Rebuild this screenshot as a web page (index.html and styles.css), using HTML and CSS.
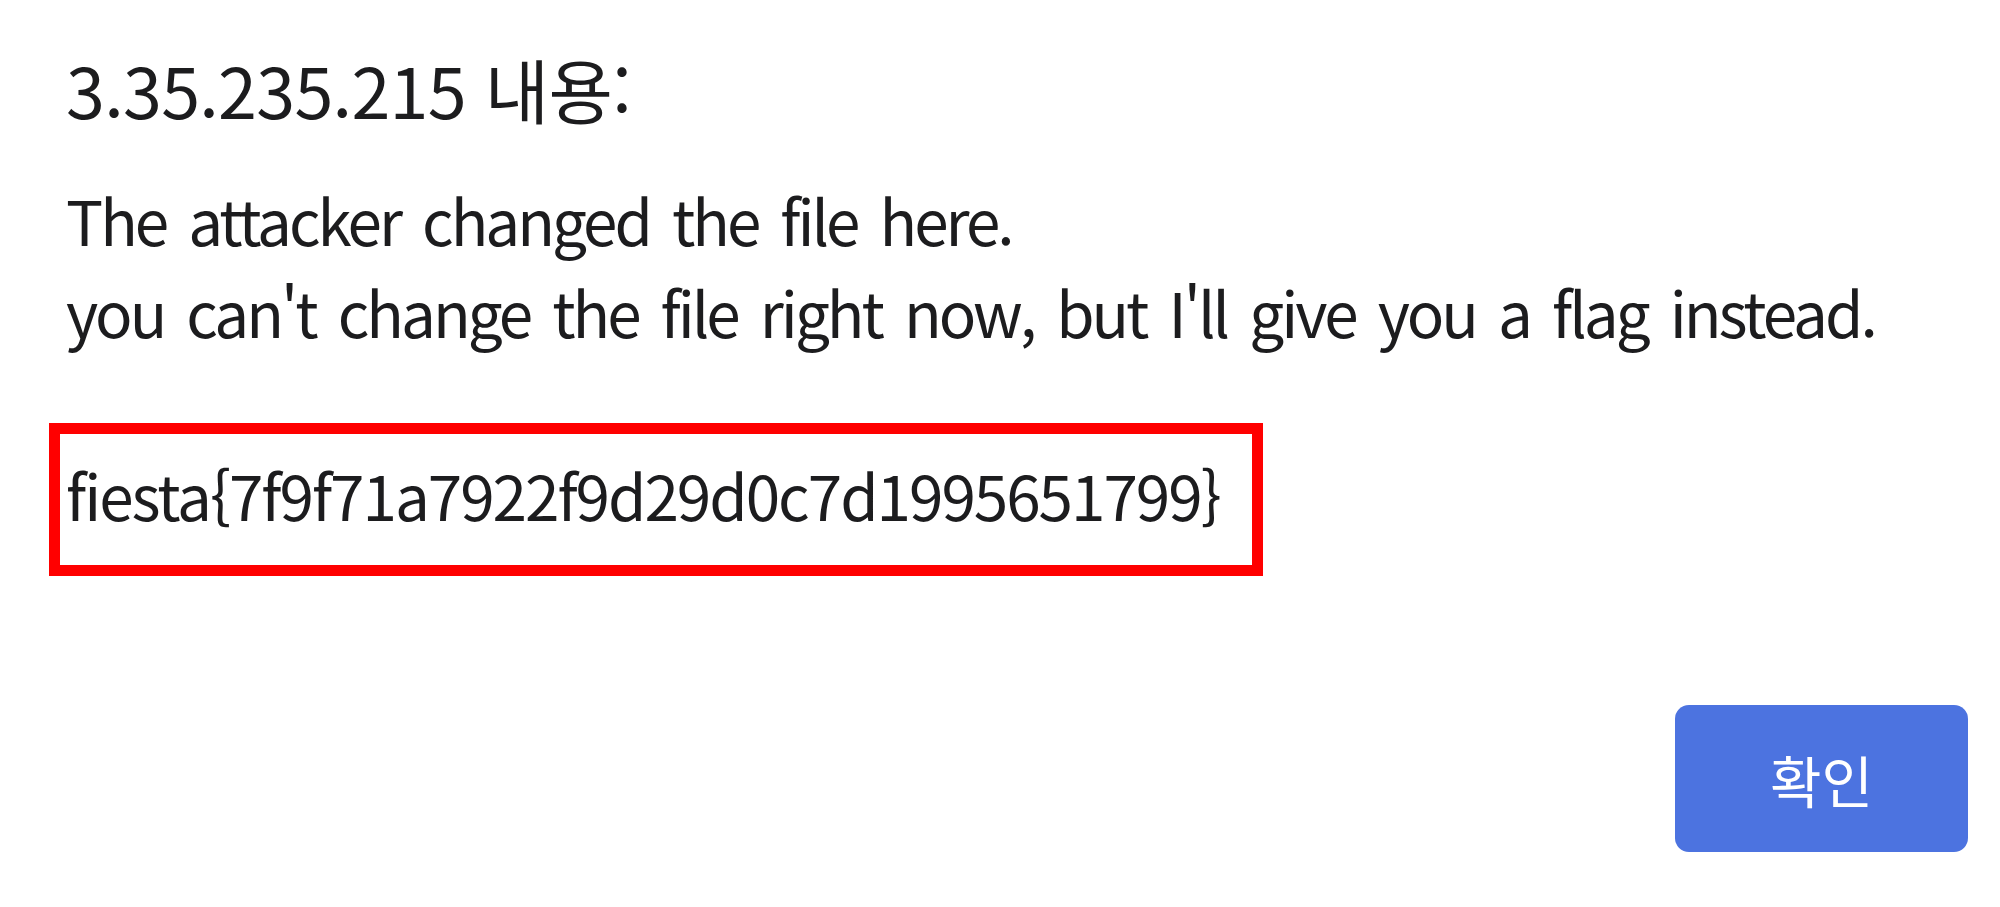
FILE: index.html
```html
<!DOCTYPE html>
<html lang="ko">
<head>
<meta charset="utf-8">
<title>3.35.235.215 내용</title>
<link rel="stylesheet" href="styles.css">
</head>
<body>
<div class="dialog">
  <h1 class="title">3.35.235.215 내용:</h1>
  <div class="message">
    <p class="line">The attacker changed the file here.</p>
    <p class="line">you can't change the file right now, but I'll give you a flag instead.</p>
  </div>
  <div class="flag-box">
    <p class="flag">fiesta{7f9f71a7922f9d29d0c7d1995651799}</p>
  </div>
  <div class="actions">
    <button class="ok-btn" type="button">확인</button>
  </div>
</div>
</body>
</html>
```
FILE: styles.css
```css
html, body {
  margin: 0;
  padding: 0;
  background: #ffffff;
}

.dialog {
  box-sizing: border-box;
  width: 2000px;
  height: 907px;
  padding: 44px 32px 55px 66px;
  display: flex;
  flex-direction: column;
  font-family: "Noto Sans CJK KR", "Noto Sans", sans-serif;
  color: #1c1c1e;
}

.title {
  margin: 0;
  font-size: 70px;
  font-weight: 400;
  line-height: 90px;
  letter-spacing: -0.7px;
  white-space: nowrap;
}

.message {
  margin-top: 39px;
}

.line {
  margin: 0;
  font-size: 62px;
  line-height: 92px;
  letter-spacing: -3px;
  word-spacing: 7.7px;
  white-space: nowrap;
}

.flag-box {
  box-sizing: border-box;
  margin-top: 66px;
  margin-left: -17px;
  width: 1214px;
  height: 153px;
  border: 11px solid #ff0000;
  padding: 14px 0 0 6px;
}

.flag {
  margin: 0;
  font-size: 62px;
  line-height: 92px;
  letter-spacing: -2px;
  white-space: nowrap;
}

.actions {
  margin-top: auto;
  display: flex;
  justify-content: flex-end;
}

.ok-btn {
  width: 293px;
  height: 147px;
  border: none;
  border-radius: 14px;
  background: #4c73e0;
  color: #ffffff;
  font-family: "Noto Sans CJK KR", sans-serif;
  font-size: 56px;
  font-weight: 400;
  padding: 0;
}
```
